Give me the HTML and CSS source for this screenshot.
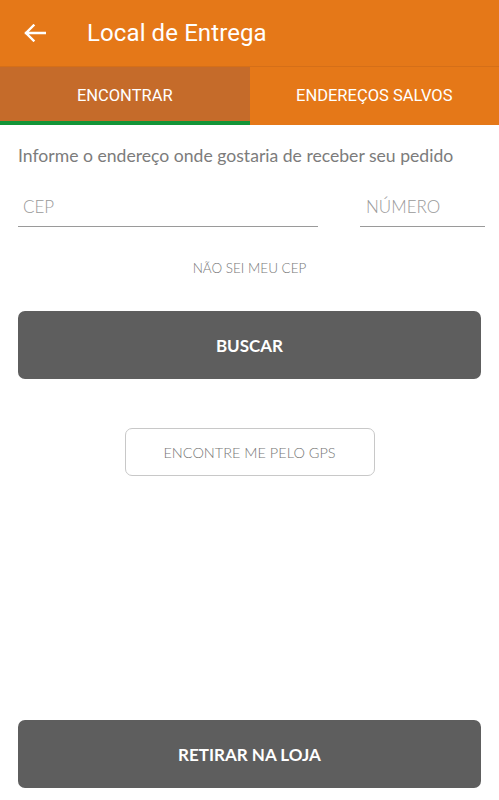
FILE: index.html
```html
<!DOCTYPE html>
<html lang="pt-BR">
<head>
    <meta charset="UTF-8">
    <meta name="viewport" content="width=device-width, initial-scale=1.0">
    <title>Local de Entrega</title>
    <link rel="stylesheet" href="styles.css">
</head>
<body>
    <div class="app">
        <header class="toolbar">
            <button class="back" aria-label="Voltar">
                <svg width="22" height="18" viewBox="0 0 22 18">
                    <path d="M21 9H2M9.5 1.5L2 9l7.5 7.5" fill="none" stroke="#fff" stroke-width="2.4" stroke-linecap="square"/>
                </svg>
            </button>
            <h1>Local de Entrega</h1>
        </header>
        <nav class="tabs">
            <div class="tab active">ENCONTRAR</div>
            <div class="tab">ENDEREÇOS SALVOS</div>
        </nav>

        <main class="content">
            <p class="intro">Informe o endereço onde gostaria de receber seu pedido</p>
            <div class="fields">
                <input class="field cep" type="text" placeholder="CEP">
                <input class="field numero" type="text" placeholder="NÚMERO">
            </div>
            <a class="link" href="#">NÃO SEI MEU CEP</a>
            <button class="btn-dark buscar">BUSCAR</button>
            <button class="btn-outline">ENCONTRE ME PELO GPS</button>
            <div class="spacer"></div>
            <button class="btn-dark retirar">RETIRAR NA LOJA</button>
        </main>
    </div>
</body>
</html>
```
FILE: styles.css
```css
* {
    box-sizing: border-box;
}
body {
    margin: 0;
    padding: 0;
    background: #fff;
    font-family: Lato, "Open Sans", sans-serif;
    color: #777;
}
.app {
    display: flex;
    flex-direction: column;
    min-height: 800px;
}
.toolbar {
    height: 67px;
    background: #e57818;
    display: flex;
    align-items: center;
    border-bottom: 1px solid #d56f18;
}
.back {
    background: none;
    border: none;
    padding: 0;
    margin-left: 24px;
    width: 22px;
    height: 18px;
    display: flex;
}
.toolbar h1 {
    margin: 0 0 0 41px;
    font-family: Roboto, sans-serif;
    font-weight: 400;
    font-size: 24px;
    color: #fff;
    letter-spacing: 0.1px;
}
.tabs {
    display: flex;
    height: 58px;
    background: #e57818;
}
.tab {
    flex: 1;
    display: flex;
    align-items: center;
    justify-content: center;
    font-family: Roboto, sans-serif;
    font-size: 16.5px;
    color: #fff;
    padding-top: 2px;
    border-bottom: 4px solid transparent;
}
.tab.active {
    background: #c56b2a;
    border-bottom-color: #139438;
}
.content {
    flex: 1;
    display: flex;
    flex-direction: column;
    padding: 18px 18px 12px;
}
.intro {
    margin: 2px 0 0;
    font-size: 17.6px;
    color: #7c7c7c;
}
.fields {
    display: flex;
    justify-content: space-between;
    margin-top: 30px;
    margin-right: -4px;
}
.field {
    border: none;
    border-bottom: 1px solid #9a9a9a;
    padding: 0 5px 9px;
    font-family: Lato, sans-serif;
    font-weight: 300;
    font-size: 17px;
    color: #555;
    outline: none;
}
.field::placeholder {
    color: #999;
}
.cep {
    width: 300px;
}
.numero {
    width: 125px;
    padding-left: 6px;
}
.link {
    align-self: center;
    margin-top: 33px;
    font-size: 13.5px;
    font-weight: 300;
    color: #777;
    text-decoration: none;
}
.btn-dark {
    width: 100%;
    background: #5e5e5e;
    color: #fff;
    border: none;
    border-radius: 7px;
    font-family: Lato, sans-serif;
    font-weight: 700;
    font-size: 17px;
}
.buscar {
    height: 68px;
    margin-top: 35px;
}
.btn-outline {
    align-self: center;
    width: 250px;
    height: 48px;
    margin-top: 49px;
    background: #fff;
    border: 1px solid #c8c8c8;
    border-radius: 7px;
    font-family: Lato, sans-serif;
    font-weight: 300;
    font-size: 14.5px;
    color: #777;
}
.spacer {
    flex: 1;
}
.retirar {
    height: 68px;
}
```
